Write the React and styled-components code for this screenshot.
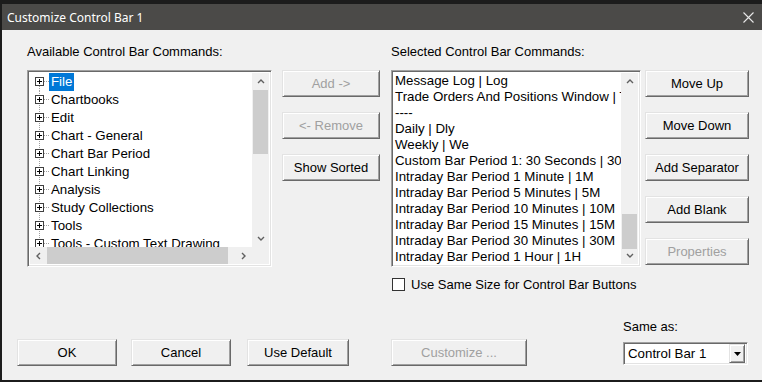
import styled, { createGlobalStyle } from 'styled-components';

const GlobalStyle = createGlobalStyle`
  html, body {
    margin: 0;
    padding: 0;
    background: #1c1c1c;
  }
  body {
    font-family: "Liberation Sans", Arial, sans-serif;
    font-size: 13px;
    color: #000;
  }
`;

const Screen = styled.div`
  width: 762px;
  height: 382px;
  padding: 4px 0 0 2px;
  box-sizing: border-box;
  overflow: hidden;
`;

const Window = styled.div`
  display: flex;
  flex-direction: column;
  width: 760px;
`;

const TitleBar = styled.div`
  height: 26px;
  background: #4b4a48;
  display: flex;
  align-items: center;
  justify-content: space-between;
  padding: 0 8px 0 5px;
  color: #fff;
  font-family: "Noto Sans", "Liberation Sans", sans-serif;
  font-size: 12px;
`;

const Panel = styled.div`
  height: 350px;
  background: #f0f0f0;
  display: flex;
  flex-direction: column;
  box-sizing: border-box;
  padding: 0 0 14px 0;
`;

const TopArea = styled.div`
  display: flex;
  align-items: flex-start;
  padding-left: 25px;
`;

const Column = styled.div`
  display: flex;
  flex-direction: column;
  margin-left: ${(p) => p.$ml || 0}px;
`;

const Label = styled.div`
  line-height: 16px;
  margin: 14px 0 10px 0;
  white-space: nowrap;
`;

const Sunken = styled.div`
  background: #fff;
  border: 1px solid;
  border-color: #a0a0a0 #fff #fff #a0a0a0;
  box-shadow: inset 1px 1px 0 #696969, inset -1px -1px 0 #e3e3e3;
  box-sizing: border-box;
  padding: 2px;
`;

const TreeBox = styled(Sunken)`
  width: 245px;
  height: 197px;
  display: grid;
  grid-template-columns: 1fr 17px;
  grid-template-rows: 1fr 17px;
`;

const ListBox = styled(Sunken)`
  width: 250px;
  height: 197px;
  display: grid;
  grid-template-columns: 1fr 17px;
`;

const Viewport = styled.div`
  overflow: hidden;
  position: relative;
  font-size: 13.3px;
`;

const TreeRow = styled.div`
  display: flex;
  align-items: center;
  height: 18px;
  white-space: nowrap;
`;

const TreeText = styled.span`
  padding: 0 2px 0 2px;
  line-height: 18px;
  background: ${(p) => (p.$selected ? '#0078d7' : 'transparent')};
  color: ${(p) => (p.$selected ? '#fff' : '#000')};
`;

const ListRow = styled.div`
  height: 16px;
  line-height: 16px;
  padding-left: 1px;
  white-space: nowrap;
`;

const ScrollV = styled.div`
  display: grid;
  grid-template-rows: 17px 1fr 17px;
  background: #f0f0f0;
`;

const ScrollH = styled.div`
  display: grid;
  grid-template-columns: 17px 1fr 17px;
  background: #f0f0f0;
`;

const Track = styled.div`
  position: relative;
`;

const Thumb = styled.div`
  position: absolute;
  background: #cdcdcd;
  ${(p) =>
    p.$horizontal
      ? `top: 0; bottom: 0; left: ${p.$start}px; width: ${p.$size}px;`
      : `left: 1px; right: 1px; top: ${p.$start}px; height: ${p.$size}px;`}
`;

const Arrow = styled.div`
  display: flex;
  align-items: center;
  justify-content: center;
`;

const Corner = styled.div`
  background: #f0f0f0;
`;

const Button = styled.div`
  width: ${(p) => p.$w || 104}px;
  height: 27px;
  margin-left: ${(p) => p.$ml || 0}px;
  box-sizing: border-box;
  display: flex;
  align-items: center;
  justify-content: center;
  background: #f0f0f0;
  border: 1px solid;
  border-color: #e3e3e3 #696969 #696969 #e3e3e3;
  box-shadow: inset 1px 1px 0 #fff, inset -1px -1px 0 #a0a0a0;
  color: ${(p) => (p.$disabled ? '#a0a0a0' : '#000')};
  white-space: nowrap;
`;

const ButtonStack = styled.div`
  display: flex;
  flex-direction: column;
  gap: 15px;
  margin-top: 40px;
  margin-left: ${(p) => p.$ml || 0}px;
`;

const CheckRow = styled.label`
  display: flex;
  align-items: center;
  gap: 6px;
  margin-top: 10px;
  margin-left: 1px;
  height: 14px;
  white-space: nowrap;
`;

const CheckBox = styled.span`
  width: 13px;
  height: 13px;
  box-sizing: border-box;
  border: 1px solid #333;
  background: #fff;
`;

const BottomRow = styled.div`
  margin-top: auto;
  display: flex;
  align-items: flex-end;
  padding-left: 15px;
`;

const SameAs = styled.div`
  display: flex;
  flex-direction: column;
  margin-left: 96px;
  margin-bottom: 1px;
`;

const SameAsLabel = styled.div`
  line-height: 16px;
  margin-bottom: 7px;
`;

const Combo = styled(Sunken)`
  width: 125px;
  height: 23px;
  padding: 2px;
  display: flex;
  align-items: center;
  justify-content: space-between;
  font-size: 13.3px;
`;

const ComboText = styled.span`
  padding-left: 2px;
`;

const DropButton = styled.div`
  width: 16px;
  height: 19px;
  box-sizing: border-box;
  display: flex;
  align-items: center;
  justify-content: center;
  background: #f0f0f0;
  border: 1px solid;
  border-color: #e3e3e3 #696969 #696969 #e3e3e3;
  box-shadow: inset 1px 1px 0 #fff, inset -1px -1px 0 #a0a0a0;
`;

const Chevron = ({ dir }) => {
  const pts = {
    up: '1,5 4,2 7,5',
    down: '1,2 4,5 7,2',
    left: '5,1 2,4 5,7',
    right: '2,1 5,4 2,7',
  }[dir];
  return (
    <svg width="8" height="8" viewBox="0 0 8 8">
      <polyline points={pts} fill="none" stroke="#606060" strokeWidth="1.4" />
    </svg>
  );
};

const Expander = ({ first }) => (
  <svg width="19" height="18" viewBox="0 0 19 18">
    <line x1="9.5" y1={first ? 9 : 0} x2="9.5" y2="18" stroke="#a0a0a0" strokeDasharray="1 1" />
    <line x1="14" y1="8.5" x2="19" y2="8.5" stroke="#a0a0a0" strokeDasharray="1 1" />
    <rect x="5.5" y="4.5" width="8" height="8" fill="#fff" stroke="#404040" />
    <line x1="7" y1="8.5" x2="12" y2="8.5" stroke="#000" />
    <line x1="9.5" y1="6" x2="9.5" y2="11" stroke="#000" />
  </svg>
);

const treeItems = [
  'File',
  'Chartbooks',
  'Edit',
  'Chart - General',
  'Chart Bar Period',
  'Chart Linking',
  'Analysis',
  'Study Collections',
  'Tools',
  'Tools - Custom Text Drawing',
];

const selectedItems = [
  'Message Log | Log',
  'Trade Orders And Positions Window | TOP',
  '----',
  'Daily | Dly',
  'Weekly | We',
  'Custom Bar Period 1: 30 Seconds | 30s',
  'Intraday Bar Period 1 Minute | 1M',
  'Intraday Bar Period 5 Minutes | 5M',
  'Intraday Bar Period 10 Minutes | 10M',
  'Intraday Bar Period 15 Minutes | 15M',
  'Intraday Bar Period 30 Minutes | 30M',
  'Intraday Bar Period 1 Hour | 1H',
];

export default function App() {
  return (
    <>
      <GlobalStyle />
      <Screen>
        <Window>
          <TitleBar>
            <span>Customize Control Bar 1</span>
            <svg width="11" height="11" viewBox="0 0 11 11">
              <path d="M0.5 0.5 L10.5 10.5 M10.5 0.5 L0.5 10.5" stroke="#e8e8e8" strokeWidth="1.1" />
            </svg>
          </TitleBar>
          <Panel>
            <TopArea>
              <Column>
                <Label>Available Control Bar Commands:</Label>
                <TreeBox>
                  <Viewport>
                    {treeItems.map((item, i) => (
                      <TreeRow key={item}>
                        <Expander first={i === 0} />
                        <TreeText $selected={i === 0}>{item}</TreeText>
                      </TreeRow>
                    ))}
                  </Viewport>
                  <ScrollV>
                    <Arrow><Chevron dir="up" /></Arrow>
                    <Track><Thumb $start={0} $size={64} /></Track>
                    <Arrow><Chevron dir="down" /></Arrow>
                  </ScrollV>
                  <ScrollH>
                    <Arrow><Chevron dir="left" /></Arrow>
                    <Track><Thumb $horizontal $start={0} $size={181} /></Track>
                    <Arrow><Chevron dir="right" /></Arrow>
                  </ScrollH>
                  <Corner />
                </TreeBox>
              </Column>

              <ButtonStack $ml={10}>
                <Button $w={98} $disabled>Add -&gt;</Button>
                <Button $w={98} $disabled>&lt;- Remove</Button>
                <Button $w={98}>Show Sorted</Button>
              </ButtonStack>

              <Column $ml={11}>
                <Label>Selected Control Bar Commands:</Label>
                <ListBox>
                  <Viewport>
                    {selectedItems.map((item) => (
                      <ListRow key={item}>{item}</ListRow>
                    ))}
                  </Viewport>
                  <ScrollV>
                    <Arrow><Chevron dir="up" /></Arrow>
                    <Track><Thumb $start={124} $size={35} /></Track>
                    <Arrow><Chevron dir="down" /></Arrow>
                  </ScrollV>
                </ListBox>
                <CheckRow>
                  <CheckBox />
                  Use Same Size for Control Bar Buttons
                </CheckRow>
              </Column>

              <ButtonStack $ml={4}>
                <Button>Move Up</Button>
                <Button>Move Down</Button>
                <Button>Add Separator</Button>
                <Button>Add Blank</Button>
                <Button $disabled>Properties</Button>
              </ButtonStack>
            </TopArea>

            <BottomRow>
              <Button $w={100}>OK</Button>
              <Button $w={100} $ml={14}>Cancel</Button>
              <Button $w={102} $ml={16}>Use Default</Button>
              <Button $w={136} $ml={42} $disabled>Customize ...</Button>
              <SameAs>
                <SameAsLabel>Same as:</SameAsLabel>
                <Combo>
                  <ComboText>Control Bar 1</ComboText>
                  <DropButton>
                    <svg width="7" height="4" viewBox="0 0 7 4">
                      <polygon points="0,0 7,0 3.5,4" fill="#000" />
                    </svg>
                  </DropButton>
                </Combo>
              </SameAs>
            </BottomRow>
          </Panel>
        </Window>
      </Screen>
    </>
  );
}
